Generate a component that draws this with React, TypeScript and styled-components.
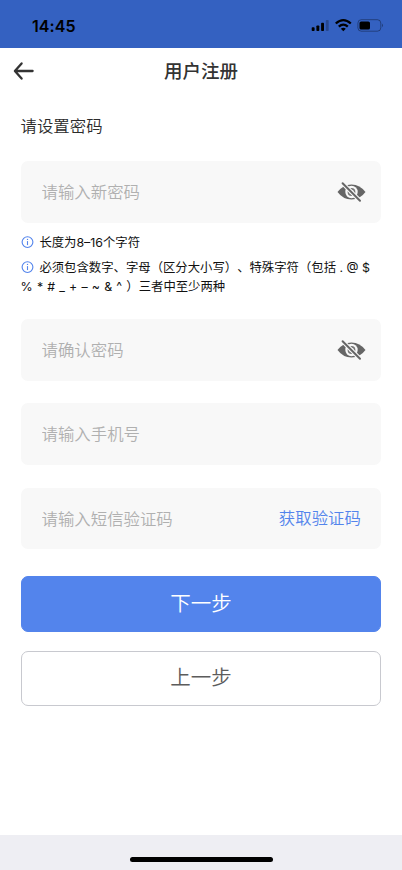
import React from 'react';
import styled, { createGlobalStyle } from 'styled-components';

const GlobalStyle = createGlobalStyle`
  * { box-sizing: border-box; }
  body { margin: 0; background: #fff; font-family: Inter, "Noto Sans CJK SC", sans-serif; text-spacing-trim: space-all; }
`;

const Screen = styled.div`
  width: 402px;
  height: 870px;
  display: flex;
  flex-direction: column;
  background: #fff;
  overflow: hidden;
`;

const StatusBar = styled.div`
  height: 48.3px;
  flex: none;
  display: flex;
  justify-content: space-between;
  padding: 16px 18px 0 32px;
  background: #3461c1;
  color: #000;
`;

const Time = styled.span`
  font-size: 16px;
  line-height: 20px;
  font-weight: 600;
  letter-spacing: 0.1px;
`;

const StatusIcons = styled.svg`
  width: 73px;
  height: 20px;
`;

const Header = styled.header`
  height: 46px;
  flex: none;
  display: grid;
  grid-template-columns: 48px 1fr 48px;
  align-items: center;
`;

const BackButton = styled.button`
  border: 0;
  background: none;
  padding: 0 0 0 13px;
  height: 46px;
  display: flex;
  align-items: center;
`;

const Title = styled.h1`
  margin: 0;
  text-align: center;
  font-size: 18.5px;
  line-height: 28px;
  font-weight: 500;
  color: #333;
`;

const Form = styled.main`
  flex: 1;
  padding: 19.5px 20.6px 0;
  display: flex;
  flex-direction: column;
`;

const Label = styled.h2`
  margin: 0 0 23.2px;
  font-size: 16.4px;
  line-height: 24px;
  height: 24px;
  flex: none;
  font-weight: 350;
  color: #2b2b2b;
`;

const Field = styled.div<{ $gap: number }>`
  height: 61.6px;
  flex: none;
  margin-bottom: ${p => p.$gap}px;
  padding: 0 15px 0 21px;
  border-radius: 7px;
  background: #f8f8f8;
  display: flex;
  align-items: center;
`;

const Input = styled.input`
  flex: 1;
  min-width: 0;
  height: 40px;
  padding: 0;
  border: 0;
  outline: 0;
  background: none;
  font: 350 16.4px Inter, "Noto Sans CJK SC", sans-serif;
  &::placeholder { color: #b0b0b0; opacity: 1; }
`;

const CodeButton = styled.button`
  border: 0;
  padding: 0 0 2px;
  margin-right: 5.6px;
  background: none;
  color: #5384ec;
  font: 350 16.4px/24px Inter, "Noto Sans CJK SC", sans-serif;
`;

const Hints = styled.div`
  flex: none;
  height: 85.4px;
  color: #111;
`;

const Hint = styled.p`
  margin: 0 -8px 7.2px 0;
  font-size: 12.36px;
  line-height: 18.6px;
`;

const HintIcon = styled.svg`
  width: 13px;
  height: 13px;
  margin-right: 5.8px;
  vertical-align: -2px;
`;

const Symbols = styled.span<{ $spacing: number }>`
  letter-spacing: ${p => p.$spacing}px;
`;

const Action = styled.button<{ $primary?: boolean }>`
  height: 55.6px;
  flex: none;
  margin-bottom: 18.9px;
  padding: 0;
  border: 1px solid ${p => (p.$primary ? '#5384ec' : '#c8c9cf')};
  border-radius: 7px;
  background: ${p => (p.$primary ? '#5384ec' : '#fff')};
  color: ${p => (p.$primary ? '#fff' : '#5c5c5c')};
  font: 350 20.5px/30px Inter, "Noto Sans CJK SC", sans-serif;
`;

const HomeArea = styled.footer`
  height: 35px;
  flex: none;
  background: #eeeef3;
  display: flex;
  justify-content: center;
  padding-top: 21.5px;
`;

const HomeIndicator = styled.div`
  width: 143px;
  height: 5px;
  border-radius: 3px;
  background: #000;
`;

const InfoIcon = () => (
  <HintIcon viewBox="0 0 13 13">
    <circle cx="6.5" cy="6.1" r="5.4" fill="none" stroke="#5384ec" strokeWidth="1.1" />
    <path d="M6.5 5.1v4" stroke="#5384ec" strokeWidth="1.1" />
    <circle cx="6.5" cy="3.4" r=".7" fill="#5384ec" />
  </HintIcon>
);

const EyeSvg = styled.svg`
  width: 29px;
  height: 22px;
  margin-top: 1px;
`;

const HiddenEye = () => (
  <EyeSvg viewBox="0 0 29 22" aria-label="显示密码">
    <path d="M.5 11Q6 3.6 14.5 3.4Q23 3.6 28.5 11Q23 18.4 14.5 18.6Q6 18.4 .5 11Z" fill="#666" />
    <circle cx="14.5" cy="11" r="6.2" fill="#f8f8f8" />
    <circle cx="14.5" cy="11" r="3.1" fill="none" stroke="#777" strokeWidth="1.6" />
    <path d="M5.6 2.2 23 19.7" stroke="#f8f8f8" strokeWidth="4.2" />
    <path d="M5.6 2.2 23 19.7" stroke="#666" strokeWidth="2" strokeLinecap="round" />
  </EyeSvg>
);

export default function App() {
  return (
    <>
      <GlobalStyle />
      <Screen>
        <StatusBar>
          <Time>14:45</Time>
          <StatusIcons viewBox="0 0 73 20">
            <rect x="0.7" y="11.3" width="2.9" height="3.7" rx=".8" />
            <rect x="5.4" y="9.5" width="2.9" height="5.5" rx=".8" />
            <rect x="10.1" y="6.7" width="2.9" height="8.3" rx=".8" />
            <rect x="14.8" y="4" width="2.9" height="11" rx=".8" opacity=".25" />
            <path d="M24.8 7.5Q32.3.7 39.8 7.5M27.8 10.7Q32.3 6.5 36.8 10.7" fill="none" stroke="#000" strokeWidth="2.3" />
            <path d="M29.8 12.8Q32.3 10.6 34.8 12.8L32.3 15.3Z" />
            <rect x="46.9" y="3.7" width="22.9" height="11.5" rx="3.4" fill="none" stroke="#000" strokeOpacity=".35" />
            <rect x="48.5" y="5.4" width="10.5" height="8.2" rx="1.7" />
            <path d="M71 7.5q1.9 1.9 0 3.8z" opacity=".4" />
          </StatusIcons>
        </StatusBar>

        <Header>
          <BackButton aria-label="返回">
            <svg width="22" height="20" viewBox="0 0 22 20" fill="none" stroke="#333" strokeWidth="2.3" strokeLinecap="round" strokeLinejoin="round">
              <path d="M8.6 2.4 1.9 10l6.7 7.6M2 10h17.6" />
            </svg>
          </BackButton>
          <Title>用户注册</Title>
        </Header>

        <Form>
          <Label>请设置密码</Label>
          <Field $gap={11}>
            <Input placeholder="请输入新密码" />
            <HiddenEye />
          </Field>
          <Hints>
            <Hint><InfoIcon />长度为8–16个字符</Hint>
            <Hint>
              <InfoIcon />必须包含数字、字母（区分大小写）、特殊字符（包括<Symbols $spacing={0}> . @ $</Symbols>
              <br />
              <Symbols $spacing={0.35}>% * # _ + – ~ &amp; ^ </Symbols>）三者中至少两种
            </Hint>
          </Hints>
          <Field $gap={22.8}>
            <Input placeholder="请确认密码" />
            <HiddenEye />
          </Field>
          <Field $gap={22.8}>
            <Input placeholder="请输入手机号" />
          </Field>
          <Field $gap={26.8}>
            <Input placeholder="请输入短信验证码" />
            <CodeButton>获取验证码</CodeButton>
          </Field>
          <Action $primary>下一步</Action>
          <Action>上一步</Action>
        </Form>

        <HomeArea><HomeIndicator /></HomeArea>
      </Screen>
    </>
  );
}
